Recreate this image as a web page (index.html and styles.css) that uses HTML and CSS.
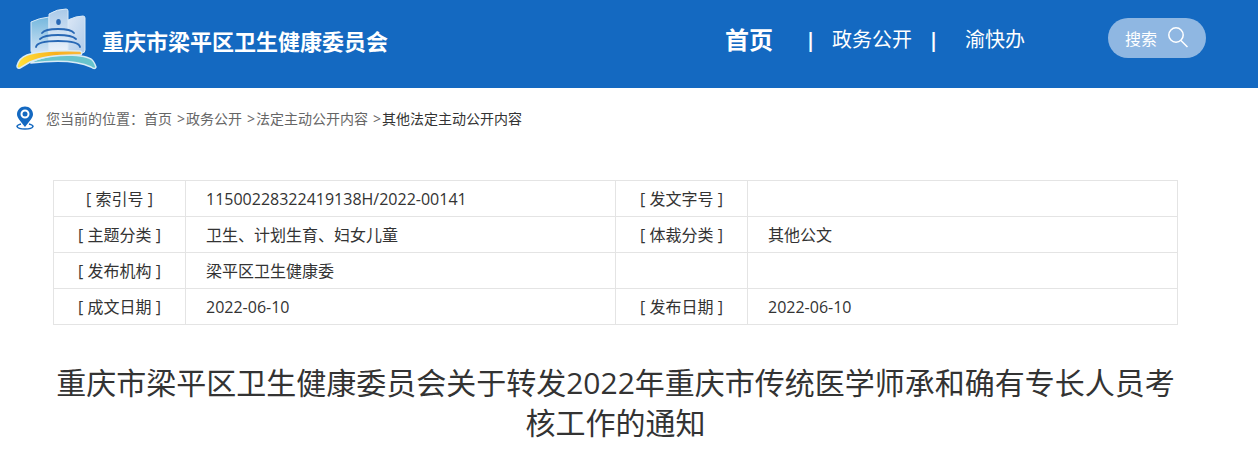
FILE: index.html
```
<!DOCTYPE html>
<html lang="zh-CN">
<head>
	<meta charset="UTF-8">
	<title>重庆市梁平区卫生健康委员会</title>
	<link rel="stylesheet" href="styles.css">
</head>
<body>
	<header class="header">
		<a href="#" class="logo">
			<svg class="logo-img" viewBox="0 0 82 64" aria-hidden="true">
				<defs>
					<linearGradient id="left" x1="0" y1="0" x2="0" y2="1">
						<stop offset="0" stop-color="#74b7dd"/>
						<stop offset="1" stop-color="#d3e4f5"/>
					</linearGradient>
					<linearGradient id="mid" x1="0" y1="0" x2="0" y2="1">
						<stop offset="0" stop-color="#a9c9e8"/>
						<stop offset="1" stop-color="#edf3fb"/>
					</linearGradient>
					<linearGradient id="right" x1="0" y1="0" x2="1" y2="1">
						<stop offset="0" stop-color="#dde8f6"/>
						<stop offset="1" stop-color="#aecbea"/>
					</linearGradient>
					<linearGradient id="gold" x1="0" y1="0" x2="1" y2="0">
						<stop offset="0" stop-color="#ffe33c"/>
						<stop offset="0.6" stop-color="#f9b01c"/>
						<stop offset="1" stop-color="#f9b83c"/>
					</linearGradient>
				</defs>
				<path d="M15 14Q23 10 33 9V45H17Q15 45 15 43Z" fill="url(#left)" stroke="#d8e9f7"/>
				<path d="M52 12Q60 8 67 8Q69 8 69 10V42Q69 45 66 45H51Z" fill="url(#right)" stroke="#d8e9f7"/>
				<path d="M33 6Q41 1 50 1Q52 1 52 3V45H33Z" fill="url(#mid)" stroke="#d8e9f7"/>
				<ellipse cx="42.500" cy="14" rx="2.3" ry="3" fill="#2868b5"/>
				<path d="M26 25Q29 21 42 21Q55 21 58 25M24 31Q28 27 42 27Q56 27 60 31M20 39Q21 33 42 33Q63 33 64 39" fill="none" stroke="#2868b5" stroke-width="1.8" stroke-linecap="round"/>
				<path d="M15 54Q31 47 47 47Q68 47 75 51Q78 53 80 59Q79 62 75 59Q56 50 15 55Z" fill="#68c4cc" stroke="#d8ebf5" stroke-width="1.5"/>
				<path d="M1 58Q3 50 11 47Q27 42 64 43Q67 44 65 47Q31 46 14 54Q9 57 4 60Q1 61 1 58Z" fill="url(#gold)" stroke="#d8ebf5" stroke-width="1.5"/>
			</svg>
			<span class="logo-text">重庆市梁平区卫生健康委员会</span>
		</a>
		<nav class="nav">
			<a href="#" class="nav-home">首页</a>
			<span class="line">|</span>
			<a href="#">政务公开</a>
			<span class="line">|</span>
			<a href="#" class="nav-last">渝快办</a>
		</nav>
		<button type="button" class="search">
			搜索
			<svg class="search-icon" viewBox="0 0 22 22" aria-hidden="true">
				<circle cx="9" cy="8" r="7.2"/>
				<path d="M14 13.500L20.500 20"/>
			</svg>
		</button>
	</header>

	<div class="position">
		<svg class="pin" viewBox="0 0 18 24" aria-hidden="true">
			<path class="pin-base" d="M5 18Q1 19 1 20.500Q2 23 9 23Q16 23 17 20.500Q17 19 13 18"/>
			<path class="pin-body" fill-rule="evenodd" d="M9 .5C4.500.5 1 4 1 8.200C1 12 4 14 9 21C14 14 17 12 17 8.200C17 4 13.500.5 9 .5ZM9 3.500A4.500 4.500 0 1 1 9 12.500A4.500 4.500 0 1 1 9 3.500Z"/>
			<circle class="pin-body" cx="9" cy="8" r="2.500"/>
		</svg>
		<span>您当前的位置：</span>
		<a href="#">首页</a>
		<span class="arrow">&gt;</span>
		<a href="#">政务公开</a>
		<span class="arrow">&gt;</span>
		<a href="#">法定主动公开内容</a>
		<span class="arrow">&gt;</span>
		<a href="#" class="current">其他法定主动公开内容</a>
	</div>

	<div class="content">
		<table class="info">
			<tr>
				<th>[ 索引号 ]</th>
				<td>11500228322419138H/2022-00141</td>
				<th>[ 发文字号 ]</th>
				<td></td>
			</tr>
			<tr>
				<th>[ 主题分类 ]</th>
				<td>卫生、计划生育、妇女儿童</td>
				<th>[ 体裁分类 ]</th>
				<td>其他公文</td>
			</tr>
			<tr>
				<th>[ 发布机构 ]</th>
				<td>梁平区卫生健康委</td>
				<th></th>
				<td></td>
			</tr>
			<tr>
				<th>[ 成文日期 ]</th>
				<td>2022-06-10</td>
				<th>[ 发布日期 ]</th>
				<td>2022-06-10</td>
			</tr>
		</table>
		<h1 class="title">重庆市梁平区卫生健康委员会关于转发2022年重庆市传统医学师承和确有专长人员考核工作的通知</h1>
	</div>
</body>
</html>
```
FILE: styles.css
```
*{
	box-sizing: border-box;
}
body{
	margin: 0;
	background: #fff;
	color: #333;
	font-family: "Open Sans","Noto Sans CJK SC",sans-serif;
	font-size: 16px;
}
a{
	color: inherit;
	text-decoration: none;
}
/* 头部 */
.header{
	display: flex;
	align-items: center;
	height: 88px;
	padding: 0 52px 12px 16px;
	background: #1469c1;
	color: #fff;
}
.logo{
	display: flex;
	align-items: center;
	gap: 4px;
	padding-top: 4px;
}
.logo-img{
	width: 82px;
	height: 64px;
}
.logo-text{
	padding-top: 2px;
	font-size: 22px;
	font-weight: bold;
	line-height: 32px;
}
.nav{
	display: flex;
	align-items: center;
	margin-left: auto;
	padding-top: 4px;
	font-size: 20px;
	line-height: 32px;
}
.nav-home{
	margin-right: 16px;
	font-size: 24px;
	font-weight: bold;
}
.line{
	width: 43px;
	font-weight: bold;
	text-align: center;
}
.nav-last{
	margin-left: 10px;
}
.search{
	display: flex;
	align-items: center;
	justify-content: center;
	gap: 10px;
	width: 98px;
	height: 40px;
	margin-left: 83px;
	padding: 0;
	border: 0;
	border-radius: 20px;
	background: #8fb7e2;
	color: #fff;
	font-family: inherit;
	font-size: 16px;
}
.search-icon{
	width: 22px;
	height: 22px;
	fill: none;
	stroke: #fff;
	stroke-width: 1.5;
}
/* 当前位置 */
.position{
	display: flex;
	align-items: center;
	height: 60px;
	padding-left: 16px;
	color: #666;
	font-size: 14px;
}
.pin{
	width: 18px;
	height: 24px;
	margin-right: 12px;
}
.pin-body{
	fill: #1469c1;
}
.pin-base{
	fill: none;
	stroke: #1469c1;
	stroke-width: 1.5;
}
.arrow{
	width: 9px;
	margin-left: 5px;
}
.current{
	color: #333;
}
/* 正文 */
.content{
	padding: 32px 80px 0 53px;
}
.info{
	width: 100%;
	border-collapse: collapse;
	table-layout: fixed;
}
.info th,.info td{
	height: 36px;
	padding: 0;
	border: 1px solid #e4e4e4;
	line-height: 24px;
}
.info th{
	width: 132px;
	font-weight: normal;
	text-align: center;
}
.info td{
	padding-left: 20px;
}
.title{
	margin: 38px 0 0;
	font-size: 30px;
	font-weight: normal;
	line-height: 40px;
	text-align: center;
}
```
